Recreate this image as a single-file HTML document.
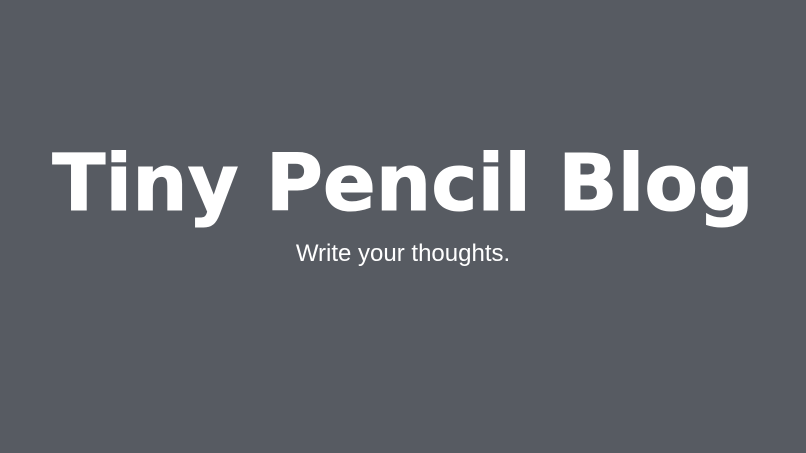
<!DOCTYPE html>
<html><head><style>
html,body{margin:0;padding:0;width:806px;height:453px;background:#575b62;overflow:hidden}
h1{position:absolute;left:0;top:145px;width:806px;margin:0;text-align:center;font:bold 78px/78px "DejaVu Sans",sans-serif;color:#fff;-webkit-text-stroke:1px #fff}
p{position:absolute;left:0;top:242px;width:806px;margin:0;text-align:center;font:24px/24px "Liberation Sans",sans-serif;color:#fff}
</style></head><body>
<h1>Tiny Pencil Blog</h1>
<p>Write your thoughts.</p>
</body></html>
